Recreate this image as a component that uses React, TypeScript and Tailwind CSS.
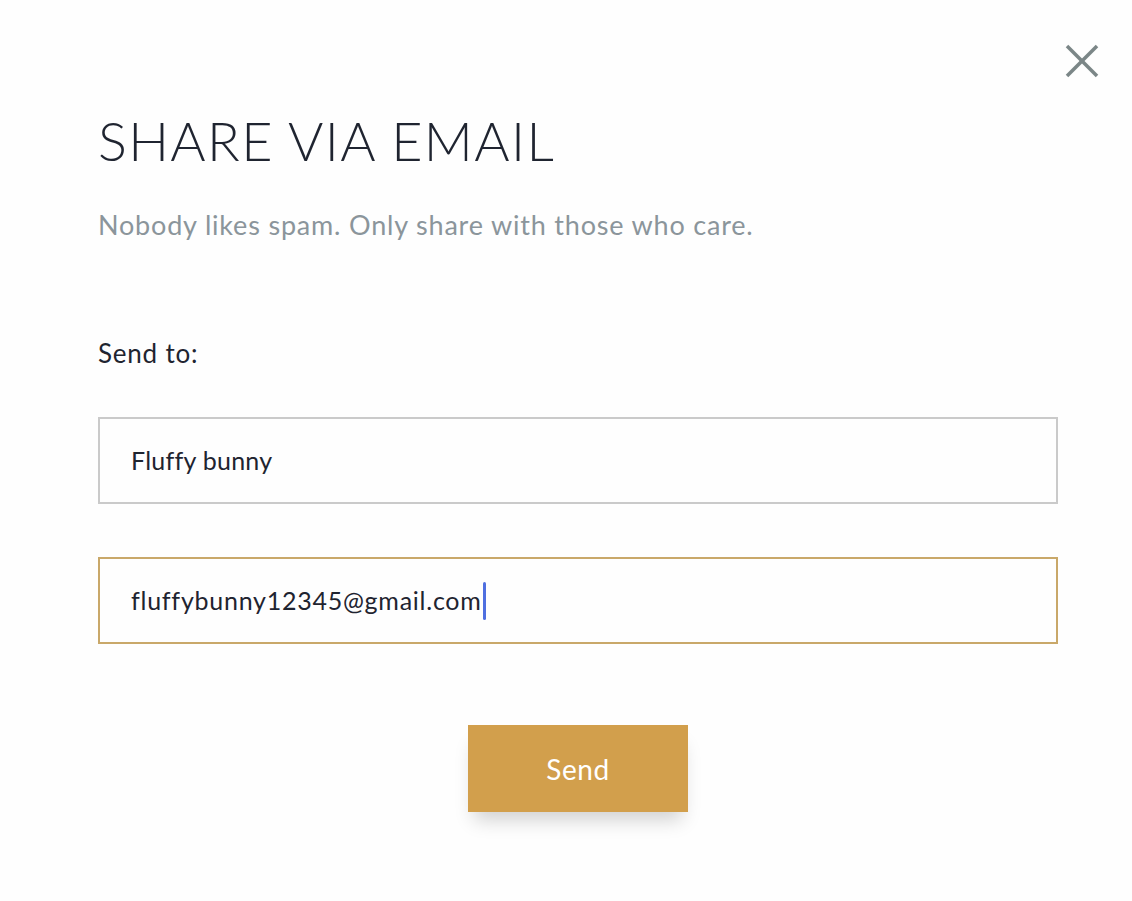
const CloseIcon = () => (
  <svg width="34" height="34" viewBox="0 0 34 34" fill="none" stroke="currentColor" strokeWidth="3.6" strokeLinecap="butt">
    <path d="M2 2 L32 32" />
    <path d="M32 2 L2 32" />
  </svg>
);

const App = () => {
  return (
    <div className="min-h-[901px] w-full bg-[#fefefe] font-['Lato',sans-serif] relative">
      {/* Close button */}
      <button className="absolute left-[1065px] top-[44px] text-[#7b8687]">
        <CloseIcon />
      </button>

      <div className="pl-[98px] pr-[74px] pt-[108px]">
        {/* Header */}
        <h1 className="text-[54px] leading-[66px] font-light tracking-[0.025em] text-[#1f2430]">
          SHARE VIA EMAIL
        </h1>
        <p className="mt-[34px] text-[27px] leading-[34px] tracking-[0.03em] text-[#8b959b]">
          Nobody likes spam. Only share with those who care.
        </p>

        {/* Form */}
        <div className="mt-[94px] text-[26px] leading-[34px] tracking-[0.03em] text-[#1f2430]">Send to:</div>

        <div className="mt-[47px] flex flex-col gap-[53px]">
          <div className="h-[87px] border-2 border-[#cacaca] flex items-center px-[31px] text-[25px] tracking-[0.01em] text-[#1f2430]">
            Fluffy bunny
          </div>
          <div className="h-[87px] border-2 border-[#c9a869] flex items-center px-[31px] text-[25px] tracking-[0.03em] text-[#1f2430]">
            fluffybunny12345@gmail.com
            <span className="ml-[1px] inline-block w-[3px] h-[38px] rounded-full bg-[#4f6fe0]" />
          </div>
        </div>

        <div className="mt-[81px] flex justify-center">
          <button className="w-[220px] h-[87px] bg-[#d29f4c] text-white text-[28px] tracking-[0.02em] shadow-[0_14px_18px_-6px_rgba(0,0,0,0.18)]">
            Send
          </button>
        </div>
      </div>
    </div>
  );
};

export default App;
